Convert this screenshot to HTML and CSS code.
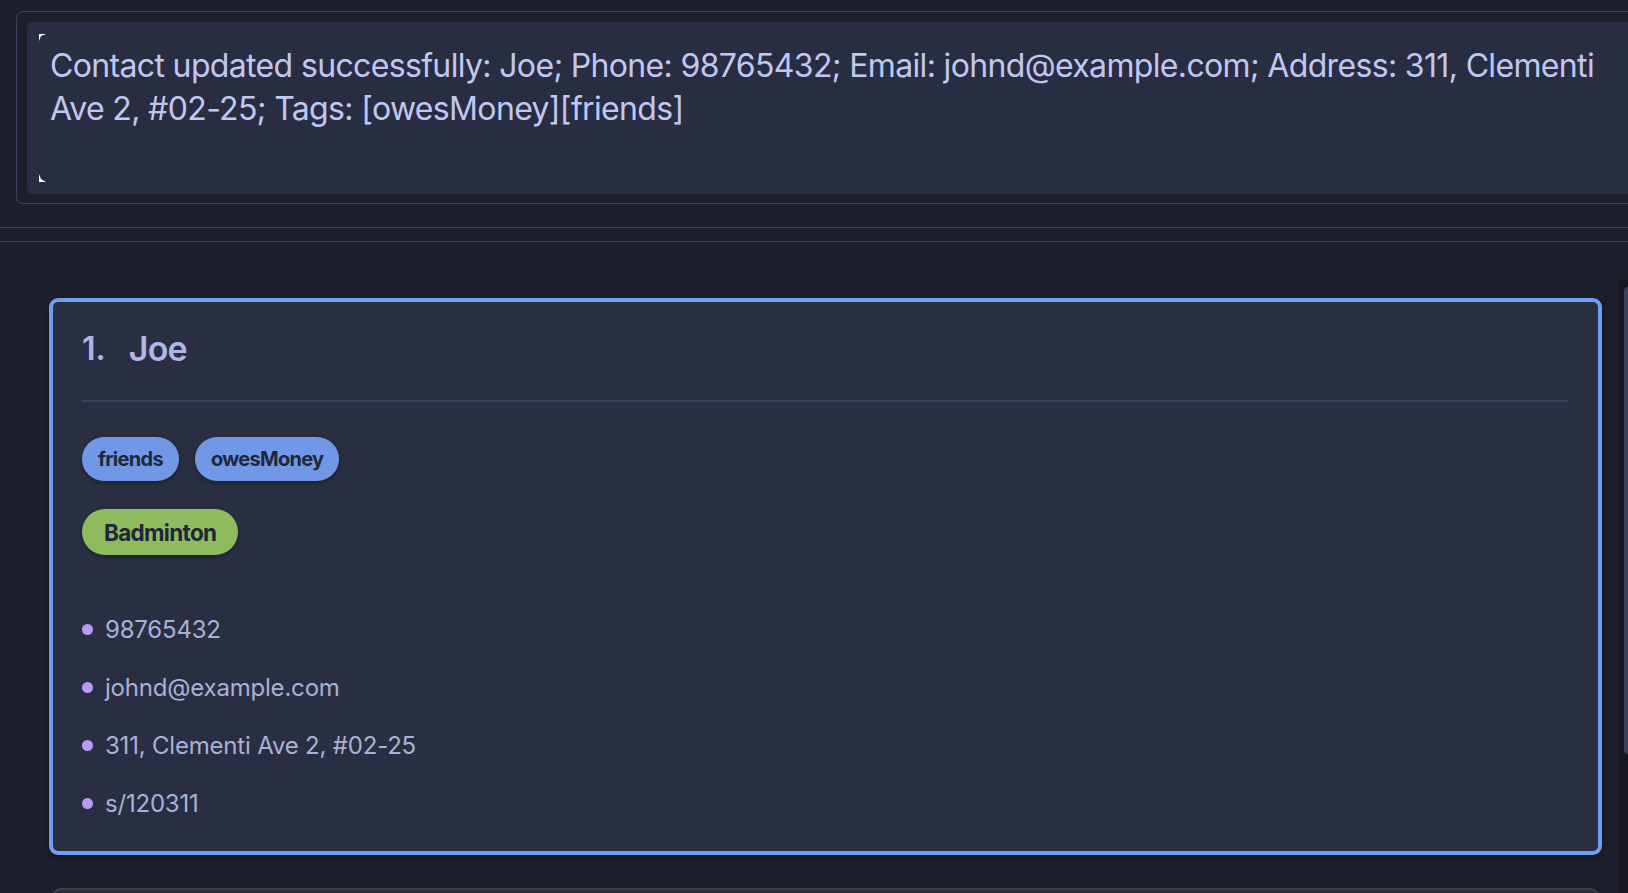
FILE: index.html
```html
<!DOCTYPE html>
<html lang="en">
<head>
<meta charset="utf-8">
<title>Contacts</title>
<link rel="stylesheet" href="styles.css">
</head>
<body>
<div class="app">
  <section class="result">
    <div class="result-box">
      <div class="result-text">
        <span class="line">Contact updated successfully: Joe; Phone: 98765432; Email: johnd@example.com; Address: 311, Clementi</span><br>
        <span class="line">Ave 2, #02-25; Tags: [owesMoney][friends]</span>
        <svg class="corner corner-tl" width="7" height="7" viewBox="0 0 7 7"><polygon points="0,0 7,0 2,2 0,7" fill="#ffffff"/></svg>
        <svg class="corner corner-bl" width="7" height="8" viewBox="0 0 7 8"><polygon points="0,0 2,5 7,8 0,8" fill="#ffffff"/></svg>
      </div>
    </div>
  </section>
  <div class="split"></div>
  <section class="list-panel">
    <div class="list">
      <article class="card selected">
        <header class="card-head">
          <span class="index">1.</span>
          <span class="name">Joe</span>
        </header>
        <div class="divider"></div>
        <div class="tags">
          <span class="tag">friends</span>
          <span class="tag">owesMoney</span>
        </div>
        <div class="groups">
          <span class="group">Badminton</span>
        </div>
        <ul class="details">
          <li>98765432</li>
          <li>johnd@example.com</li>
          <li>311, Clementi Ave 2, #02-25</li>
          <li>s/120311</li>
        </ul>
      </article>
      <article class="card next"></article>
    </div>
    <div class="scrollbar"><div class="thumb"></div></div>
  </section>
</div>
</body>
</html>
```

FILE: styles.css
```css
* { box-sizing: border-box; }

html, body {
  margin: 0;
  height: 100%;
  overflow: hidden;
  background: #1e1f2d;
  font-family: "Inter", "Noto Sans", sans-serif;
}

.app {
  height: 893px;
  display: flex;
  flex-direction: column;
}

.result {
  padding: 11px 0 0 16px;
}

.result-box {
  border: 1.5px solid #3a3f5a;
  border-right: none;
  border-radius: 7px 0 0 7px;
  padding: 10px 0 9px 10px;
}

.result-text {
  position: relative;
  height: 172px;
  background: #292d42;
  border-radius: 5px 0 0 5px;
  padding: 22px 0 0 23px;
  color: #c0c8f2;
  font-size: 32px;
  line-height: 43px;
  letter-spacing: -0.65px;
  white-space: nowrap;
  overflow: hidden;
}

.corner {
  position: absolute;
  left: 12px;
  display: block;
}
.corner-tl { top: 12px; }
.corner-bl { top: 152px; }

.split {
  margin-top: 23px;
  height: 15px;
  border-top: 1.5px solid #3a3f5a;
  border-bottom: 1.5px solid #3a3f5a;
}

.list-panel {
  flex: 1;
  display: flex;
  min-height: 0;
}

.list {
  flex: 1;
  padding: 56px 16px 0 49px;
  display: flex;
  flex-direction: column;
  gap: 33px;
}

.card {
  background: #2a2e42;
  border-radius: 9px;
  flex-shrink: 0;
}

.card.selected {
  height: 557px;
  border: 4px solid #6f9ef2;
  padding: 0 30px 0 29px;
  box-shadow: 0 3px 8px rgba(0, 0, 0, 0.35);
}

.card.next {
  height: 120px;
  margin: 0 3px;
  border: 2px solid #3c4047;
  background: #2a2d36;
}

.card-head {
  display: flex;
  align-items: center;
  gap: 23px;
  padding-top: 30px;
  height: 64px;
  line-height: 34px;
  color: #aeb6e4;
  font-weight: 600;
}

.index {
  font-size: 32px;
}

.name {
  font-size: 34px;
  letter-spacing: -0.8px;
}

.divider {
  margin-top: 34px;
  height: 2px;
  background: #3b405e;
}

.tags {
  display: flex;
  gap: 16px;
  margin-top: 35px;
}

.tag, .group {
  display: inline-flex;
  align-items: center;
  border-radius: 23px;
  font-weight: 700;
  color: #22263a;
  box-shadow: 0 2px 4px rgba(0, 0, 0, 0.3);
}

.tag {
  height: 44px;
  padding: 0 16px;
  background: #7098e6;
  font-size: 20px;
  letter-spacing: -0.7px;
}

.groups {
  display: flex;
  margin-top: 28px;
}

.group {
  height: 46px;
  padding: 0 22px;
  background: #8fbb5f;
  font-size: 22.5px;
  letter-spacing: -0.7px;
}

.details {
  list-style: none;
  margin: 45px 0 0;
  padding: 0;
}

.details li {
  display: flex;
  align-items: center;
  gap: 12px;
  height: 58px;
  color: #a9b1d6;
  font-size: 24px;
  letter-spacing: -0.2px;
}

.details li::before {
  content: "";
  width: 11px;
  height: 11px;
  border-radius: 50%;
  background: #bb9af7;
  flex-shrink: 0;
}

.scrollbar {
  width: 10px;
  margin: 38px 0 0 0;
  background: #16161e;
  padding: 7px 0 0 6px;
}

.thumb {
  height: 467px;
  background: #3b4261;
  border-radius: 4px 0 0 4px;
}
```
